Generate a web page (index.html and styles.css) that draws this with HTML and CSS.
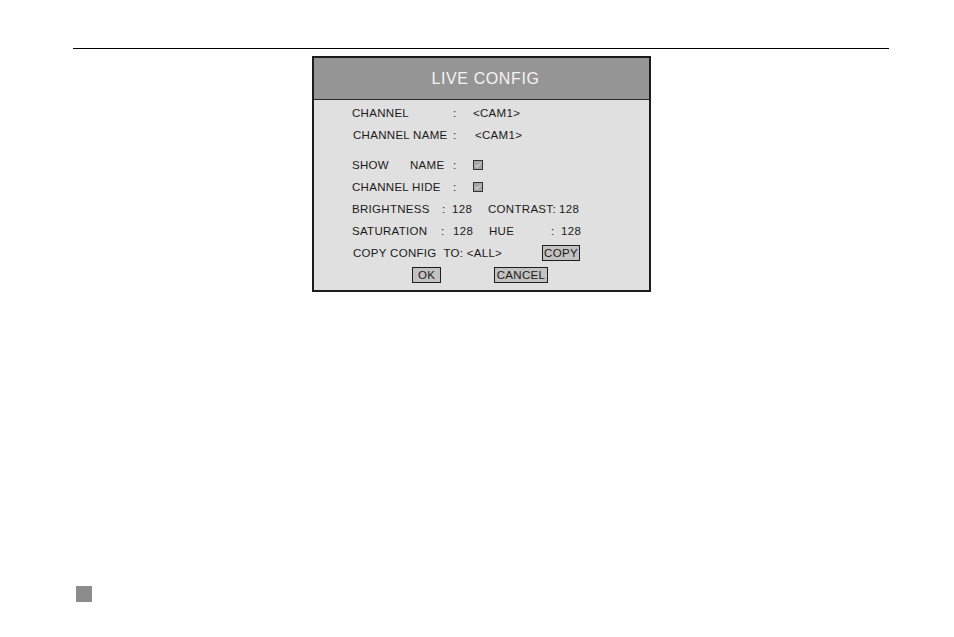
FILE: index.html
```html
<!DOCTYPE html>
<html>
<head>
<meta charset="utf-8">
<link rel="stylesheet" href="styles.css">
</head>
<body>
<div class="page">
  <div class="rule"></div>
  <div class="dialog">
    <div class="title">LIVE CONFIG</div>
    <div class="content">
      <div class="row">
        <span class="c-label">CHANNEL</span><span class="c-colon">:</span><span class="c-val">&lt;CAM1&gt;</span>
      </div>
      <div class="row">
        <span class="c-label shift">CHANNEL NAME</span><span class="c-colon">:</span><span class="c-val shift2">&lt;CAM1&gt;</span>
      </div>
      <div class="row gap">
        <span class="w-show">SHOW</span><span class="w-name">NAME</span><span class="c-colon">:</span><span class="box"><svg width="8" height="8" viewBox="0 0 8 8"><path d="M1.5 4 L3.4 6 L6.8 2" fill="none" stroke="#d6d6d6" stroke-width="1.1"/></svg></span>
      </div>
      <div class="row">
        <span class="c-label">CHANNEL HIDE</span><span class="c-colon">:</span><span class="box"><svg width="8" height="8" viewBox="0 0 8 8"><path d="M1.5 4 L3.4 6 L6.8 2" fill="none" stroke="#d6d6d6" stroke-width="1.1"/></svg></span>
      </div>
      <div class="row">
        <span class="w-bright">BRIGHTNESS</span><span class="w-bcolon">:</span><span class="w-bval">128</span><span class="w-contrast">CONTRAST:</span><span>128</span>
      </div>
      <div class="row">
        <span class="w-sat">SATURATION</span><span class="w-scolon">:</span><span class="w-sval">128</span><span class="w-hue">HUE</span><span class="w-hcolon">:</span><span>128</span>
      </div>
      <div class="row">
        <span class="w-copycfg">COPY CONFIG&nbsp; TO: &lt;ALL&gt;</span><span class="btn btn-copy">COPY</span>
      </div>
      <div class="row btns">
        <span class="btn btn-ok">OK</span><span class="btn btn-cancel">CANCEL</span>
      </div>
    </div>
  </div>
  <div class="marker"></div>
</div>
</body>
</html>
```
FILE: styles.css
```css
html, body {
  margin: 0;
  padding: 0;
  background: #ffffff;
}
.page {
  width: 954px;
  height: 637px;
  overflow: hidden;
  font-family: "Liberation Sans", Arial, sans-serif;
  color: #1a1a1a;
}
.rule {
  margin-top: 48px;
  margin-left: 73px;
  width: 816px;
  height: 1px;
  background: #000;
}
.dialog {
  margin-top: 7px;
  margin-left: 312px;
  width: 339px;
  height: 236px;
  box-sizing: border-box;
  border: 2px solid #1e1c1a;
  background: #e0e0e0;
}
.title {
  height: 41px;
  background: #959595;
  border-bottom: 1px solid #2a2a2a;
  color: #f4f4f4;
  font-size: 16px;
  letter-spacing: 0.6px;
  display: flex;
  align-items: center;
  justify-content: center;
  padding-left: 8px;
}
.content {
  padding-top: 2px;
  padding-left: 38px;
}
.row {
  height: 22px;
  display: flex;
  align-items: center;
  font-size: 11.5px;
  letter-spacing: 0.3px;
  white-space: nowrap;
}
.row.gap {
  margin-top: 8px;
}
.c-label { width: 101px; }
.c-label.shift { margin-left: 1px; width: 100px; }
.c-colon { width: 20px; }
.c-val.shift2 { margin-left: 2px; }
.w-show { width: 58px; }
.w-name { width: 43px; }
.box {
  width: 10px;
  height: 10px;
  box-sizing: border-box;
  border: 1px solid #333;
  background: #a6a6a6;
  display: flex;
  align-items: center;
  justify-content: center;
}
.box svg { display: block; }
.w-bright { width: 90px; }
.w-bcolon { width: 10px; }
.w-bval { width: 36px; }
.w-contrast { width: 71px; }
.w-sat { width: 89px; }
.w-scolon { width: 12px; }
.w-sval { width: 36px; }
.w-hue { width: 62px; }
.w-hcolon { width: 10px; }
.w-copycfg { margin-left: 1px; width: 189px; }
.btn {
  box-sizing: border-box;
  border: 1px solid #1e1e1e;
  background: #c2c2c2;
  display: flex;
  align-items: center;
  justify-content: center;
  font-size: 11.5px;
}
.btn-copy { width: 38px; height: 16px; }
.btns { padding-left: 60px; }
.btn-ok { width: 29px; height: 16px; }
.btn-cancel { width: 54px; height: 16px; margin-left: 53px; }
.marker {
  margin-top: 294px;
  margin-left: 76px;
  width: 16px;
  height: 16px;
  background: #8c8c8c;
}
```
